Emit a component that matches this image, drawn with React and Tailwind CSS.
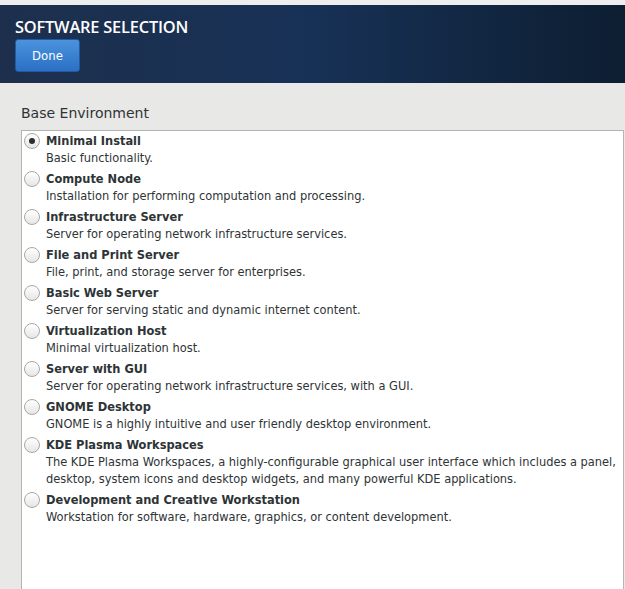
const environments = [
  { name: 'Minimal Install', desc: ['Basic functionality.'], checked: true },
  { name: 'Compute Node', desc: ['Installation for performing computation and processing.'] },
  { name: 'Infrastructure Server', desc: ['Server for operating network infrastructure services.'] },
  { name: 'File and Print Server', desc: ['File, print, and storage server for enterprises.'] },
  { name: 'Basic Web Server', desc: ['Server for serving static and dynamic internet content.'] },
  { name: 'Virtualization Host', desc: ['Minimal virtualization host.'] },
  { name: 'Server with GUI', desc: ['Server for operating network infrastructure services, with a GUI.'] },
  { name: 'GNOME Desktop', desc: ['GNOME is a highly intuitive and user friendly desktop environment.'] },
  {
    name: 'KDE Plasma Workspaces',
    desc: [
      'The KDE Plasma Workspaces, a highly-configurable graphical user interface which includes a panel,',
      'desktop, system icons and desktop widgets, and many powerful KDE applications.',
    ],
  },
  { name: 'Development and Creative Workstation', desc: ['Workstation for software, hardware, graphics, or content development.'] },
];

function Radio({ checked }) {
  return (
    <span className="mt-[1px] flex h-4 w-4 shrink-0 items-center justify-center rounded-full border border-[#a8a8a8] bg-gradient-to-b from-white to-[#e6e6e6] shadow-[inset_0_1px_0_#fff]">
      {checked && <span className="h-[6px] w-[6px] rounded-full bg-[#2e2e2e]" />}
    </span>
  );
}

export default function App() {
  return (
    <div className="flex h-[589px] w-[625px] flex-col overflow-hidden bg-[#e8e8e7] font-['DejaVu_Sans',sans-serif]">
      <div className="h-[5px] bg-[#eeeeee]" />
      {/* Header */}
      <header className="flex h-[78px] flex-col bg-gradient-to-r from-[#1d2f4d] via-[#173156] to-[#0d1e31] px-[15px] pt-[12px]">
        <h1 className="text-[16.4px] leading-[20px] text-white font-['Open_Sans','DejaVu_Sans',sans-serif] font-semibold tracking-[-0.2px]">
          SOFTWARE SELECTION
        </h1>
        <button className="mt-[2px] h-[33px] w-[65px] rounded-[3px] border border-[#1f5aa3] bg-gradient-to-b from-[#4b93de] to-[#2b70c4] text-[13px] text-white font-['DejaVu_Sans_Condensed','DejaVu_Sans',sans-serif]">
          Done
        </button>
      </header>

      <div className="flex flex-1 flex-col pl-[21px] pr-[1px]">
        <div className="pt-[21px] pb-[8px] text-[14px] leading-[18px] text-[#2e3436]">
          Base Environment
        </div>
        <div className="flex flex-1 flex-col gap-1 border border-b-0 border-[#b4b4b4] bg-white pl-[2px] pt-[1px]">
          {environments.map((env) => (
            <div key={env.name} className="flex gap-[6px]">
              <Radio checked={env.checked} />
              <div className="whitespace-nowrap text-[12.7px] leading-[17px] text-[#2e3436] font-['DejaVu_Sans_Condensed','DejaVu_Sans',sans-serif]">
                <div className="font-bold">{env.name}</div>
                {env.desc.map((line) => (
                  <div key={line}>{line}</div>
                ))}
              </div>
            </div>
          ))}
        </div>
      </div>
    </div>
  );
}
